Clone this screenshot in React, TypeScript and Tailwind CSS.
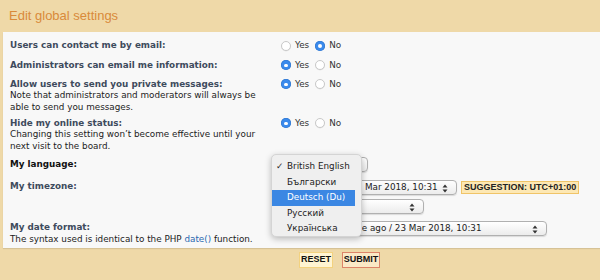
import React from "react";

function Radio({ checked, className }: { checked: boolean; className?: string }) {
  if (checked) {
    return (
      <span className={`flex h-[10px] w-[10px] shrink-0 items-center justify-center rounded-full bg-[#3a8aec] shadow-[inset_0_0_0_0.5px_#2a70c8] ${className ?? ""}`}>
        <span className="h-[3.5px] w-[3.5px] rounded-full bg-white" />
      </span>
    );
  }
  return (
    <span
      className={`block h-[10px] w-[10px] shrink-0 rounded-full border border-[#c9c9c9] bg-white shadow-[0_0.5px_0.5px_rgba(0,0,0,0.08)] ${className ?? ""}`}
    />
  );
}

function YesNo({ yes }: { yes: boolean }) {
  return (
    <div className="flex h-[11.5px] items-center text-[#333]">
      <Radio checked={yes} />
      <span className="ml-[4px]">Yes</span>
      <Radio checked={!yes} className="ml-[6px]" />
      <span className="ml-[4px]">No</span>
    </div>
  );
}

function Arrows() {
  return (
    <svg width="6" height="9" viewBox="0 0 6 9" className="absolute right-[8px] top-[3px]">
      <path d="M3 0.5 L5.5 3.5 H0.5 Z" fill="#333" />
      <path d="M3 8.5 L5.5 5.5 H0.5 Z" fill="#333" />
    </svg>
  );
}

function Select({ text, width, className }: { text: string; width: string; className?: string }) {
  return (
    <div
      className={`relative h-[15px] overflow-hidden whitespace-nowrap rounded-[4px] border border-[#b0b0b0] bg-gradient-to-b from-white to-[#ececec] pl-[6px] pr-[18px] leading-[13px] text-[#222] shadow-[0_1px_1px_rgba(0,0,0,0.12)] ${width} ${className ?? ""}`}
    >
      {text}
      <Arrows />
    </div>
  );
}

const langs = ["British English", "Български", "Deutsch (Du)", "Русский", "Українська"];

export default function App() {
  return (
    <div className="relative h-[280px] w-[600px] overflow-hidden bg-[#efd9a8] font-['DejaVu_Sans',sans-serif] text-[8.8px] leading-[11.5px]">
      {/* header */}
      <div className="flex h-[32px] items-center pl-[9px] font-['Liberation_Sans',sans-serif] text-[13px] text-[#d98a3a]">
        Edit global settings
      </div>

      {/* panel */}
      <div className="ml-[3px] flex h-[216px] flex-col bg-[#f8f8f8] pl-[7px] shadow-[0_1px_1px_rgba(0,0,0,0.1)]">
        <div className="mt-[8px] flex">
          <div className="w-[271px] font-bold text-[#3e4b5d]">Users can contact me by email:</div>
          <YesNo yes={false} />
        </div>

        <div className="mt-[8px] flex">
          <div className="w-[271px] font-bold text-[#3e4b5d]">Administrators can email me information:</div>
          <YesNo yes={true} />
        </div>

        <div className="mt-[7.5px] flex">
          <div className="w-[271px] whitespace-nowrap text-[#1c1c1c]">
            <div className="font-bold text-[#3e4b5d]">Allow users to send you private messages:</div>
            Note that administrators and moderators will always be
            <br />
            able to send you messages.
          </div>
          <YesNo yes={true} />
        </div>

        <div className="mt-[4.5px] flex">
          <div className="w-[271px] whitespace-nowrap text-[#1c1c1c]">
            <div className="font-bold text-[#3e4b5d]">Hide my online status:</div>
            Changing this setting won’t become effective until your
            <br />
            next visit to the board.
          </div>
          <YesNo yes={true} />
        </div>

        <div className="mt-[5px] flex h-[15px] items-center">
          <div className="w-[272px] font-bold text-[#111]">My language:</div>
          <Select text="British English" width="w-[86px]" />
        </div>

        <div className="mt-[8px] flex">
          <div className="w-[272px] pt-[1px] font-bold text-[#3e4b5d]">My timezone:</div>
          <div className="flex flex-col gap-[4px]">
            <div className="flex items-center">
              <Select text="UTC+01:00 - 23 Mar 2018, 10:31" width="w-[175px]" className="pl-[9px]" />
              <div className="ml-[4px] flex h-[13px] items-center border border-[#f0c468] bg-[#fde8b4] px-[2px] font-['Liberation_Sans',sans-serif] text-[9px] font-bold text-[#222]">
                SUGGESTION: UTC+01:00
              </div>
            </div>
            <Select text="Europe/Berlin" width="w-[142px]" />
          </div>
        </div>

        <div className="mt-[7px] flex">
          <div className="w-[266px] whitespace-nowrap pt-[1px] text-[#1c1c1c]">
            <div className="font-bold text-[#3e4b5d]">My date format:</div>
            The syntax used is identical to the PHP <span className="text-[#2b68b0]">date()</span> function.
          </div>
          <Select text="Less than a minute ago / 23 Mar 2018, 10:31" width="w-[271px]" />
        </div>
      </div>

      {/* footer */}
      <div className="flex justify-center gap-[9px] pt-[4px] pl-[79px] font-['Liberation_Sans',sans-serif] text-[9px] font-bold text-[#111]">
        <div className="flex h-[16px] w-[34px] items-center justify-center border border-[#f3d27f] bg-[#fff4d2]">RESET</div>
        <div className="flex h-[16px] w-[38px] items-center justify-center border border-[#dc8468] bg-[#fbe9c6]">SUBMIT</div>
      </div>

      {/* open language menu */}
      <div className="absolute left-[271px] top-[154px] h-[83px] w-[91px] rounded-[5px] border border-[#d4d4d4] bg-[#efefef] pt-[4px] text-[#222] shadow-[0_2px_6px_rgba(0,0,0,0.25)]">
        {langs.map((l, i) => (
          <div
            key={l}
            className={`relative mr-[6px] h-[15.5px] whitespace-nowrap pl-[15px] leading-[15.5px] ${i === 2 ? "bg-[#3b87e3] text-white" : ""}`}
          >
            {i === 0 && <span className="absolute left-[4px] top-0">✓</span>}
            {l}
          </div>
        ))}
      </div>
    </div>
  );
}
